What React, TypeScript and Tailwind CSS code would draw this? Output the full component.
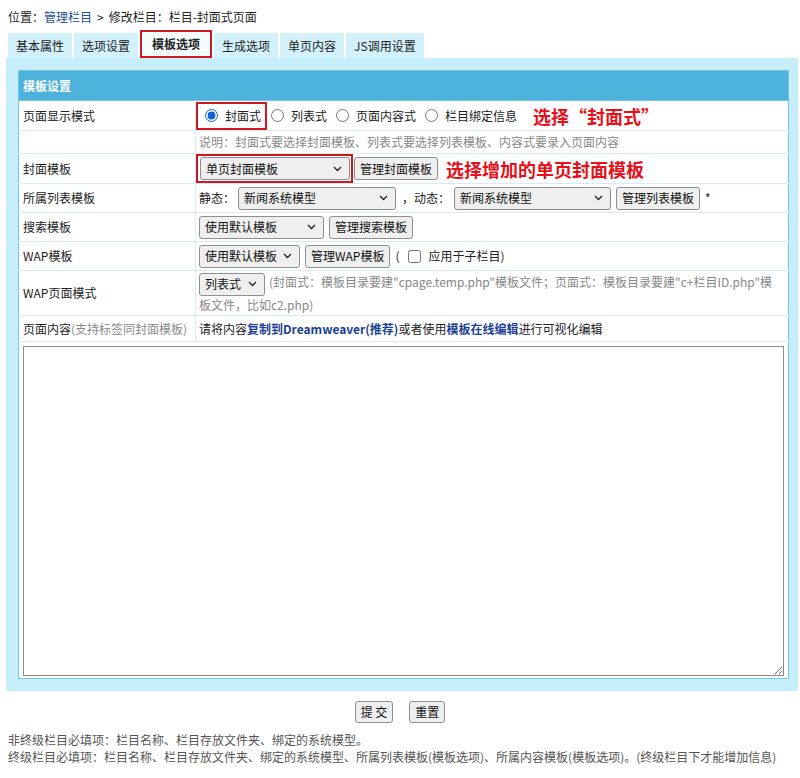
import type { ReactNode } from "react";

const font = { fontFamily: '"Noto Sans CJK SC", "Noto Sans", sans-serif' };

function Chevron() {
  return (
    <svg width="9" height="6" viewBox="0 0 9 6" className="pointer-events-none absolute right-[8px] top-1/2 -translate-y-1/2">
      <path d="M1 1 L4.5 4.5 L8 1" fill="none" stroke="#222" strokeWidth="1.3" />
    </svg>
  );
}

function Select({ value, w }: { value: string; w: string }) {
  return (
    <span className="relative inline-block align-middle">
      <select
        defaultValue={value}
        className={`${w} h-[23px] appearance-none rounded-[3px] border border-[#8f8f8f] bg-[#efefef] pl-[5px] pr-[20px] text-[12px] text-[#111] outline-none`}
        style={font}
      >
        <option>{value}</option>
      </select>
      <Chevron />
    </span>
  );
}

function Btn({ children }: { children: ReactNode }) {
  return (
    <button
      className="inline-flex h-[23px] items-center rounded-[3px] border border-[#8f8f8f] bg-[#efefef] px-[5px] align-middle text-[12px] text-[#111]"
      style={font}
    >
      {children}
    </button>
  );
}

function Radio({ label, checked, cls = "" }: { label: string; checked?: boolean; cls?: string }) {
  return (
    <label className={`flex items-center gap-[7px] ${cls}`}>
      <input type="radio" name="mode" defaultChecked={checked} className="m-0 h-[13px] w-[13px] accent-[#0f5fd8]" />
      <span>{label}</span>
    </label>
  );
}

function Row({ label, h, children }: { label: ReactNode; h: string; children: ReactNode }) {
  return (
    <tr className={`${h} border-b border-[#d3ecf5]`}>
      <td className="w-[177px] border-r border-[#d3ecf5] pl-[4px] align-middle">{label}</td>
      <td className="pl-[3px] align-middle">{children}</td>
    </tr>
  );
}

const tabs = ["基本属性", "选项设置", "模板选项", "生成选项", "单页内容", "JS调用设置"];

export default function App() {
  return (
    <div className="min-h-[778px] w-[800px] bg-white text-[12px] text-[#222]" style={font}>
      <div className="h-[30px] pl-[8px] pt-[8px] leading-[17px]">
        位置：<span className="text-[#1b4f9c]">管理栏目</span>
        <span className="mx-[5px]">&gt;</span>修改栏目：栏目-封面式页面
      </div>

      <div className="flex h-[28px] items-end gap-[2px] pl-[8px]">
        {tabs.map((t) =>
          t === "模板选项" ? (
            <div key={t} className="flex h-[28px] items-center border-2 border-[#d0161e] bg-[#f4fcff] px-[10px] font-bold">
              {t}
            </div>
          ) : (
            <div key={t} className="flex h-[25px] items-center bg-[#d2f1fb] px-[8px]">
              {t}
            </div>
          )
        )}
      </div>

      <div className="ml-[6px] w-[792px] bg-[#c6effb] pb-[12px] pl-[12px] pr-[10px] pt-[12px]">
        <table className="w-[770px] border-collapse border border-[#72c6e8] bg-white">
          <tbody>
            <tr className="h-[30px] border-b border-[#72c6e8] bg-[#4db3dd]">
              <td colSpan={2} className="pl-[4px] font-bold text-white">
                模板设置
              </td>
            </tr>
            <Row label="页面显示模式" h="h-[30px]">
              <div className="-ml-[3px] flex items-center">
                <div className="flex h-[28px] items-center border-2 border-[#d0161e] pl-[7px] pr-[4px]">
                  <Radio label="封面式" checked />
                </div>
                <Radio label="列表式" cls="ml-[4px]" />
                <Radio label="页面内容式" cls="ml-[9px]" />
                <Radio label="栏目绑定信息" cls="ml-[9px]" />
                <span className="ml-[16px] text-[18px] font-bold leading-none text-[#e60f1a]">选择“封面式”</span>
              </div>
            </Row>
            <Row label="" h="h-[23px]">
              <span className="text-[#888]">说明：封面式要选择封面模板、列表式要选择列表模板、内容式要录入页面内容</span>
            </Row>
            <Row label="封面模板" h="h-[30px]">
              <div className="-ml-[3px] flex items-center gap-[1px]">
                <div className="flex h-[29px] items-center border-2 border-[#d0161e] pl-[2px] pr-[1px]">
                  <Select value="单页封面模板" w="w-[150px]" />
                </div>
                <Btn>管理封面模板</Btn>
                <span className="ml-[7px] text-[18px] font-bold leading-none text-[#e60f1a]">选择增加的单页封面模板</span>
              </div>
            </Row>
            <Row label="所属列表模板" h="h-[29px]">
              <div className="flex items-center">
                静态：
                <span className="ml-[3px]">
                  <Select value="新闻系统模型" w="w-[158px]" />
                </span>
                <span className="ml-[6px] mr-[4px]">，动态：</span>
                <Select value="新闻系统模型" w="w-[157px]" />
                <span className="ml-[5px]">
                  <Btn>管理列表模板</Btn>
                </span>
                <span className="ml-[5px]">*</span>
              </div>
            </Row>
            <Row label="搜索模板" h="h-[29px]">
              <div className="flex items-center gap-[5px]">
                <Select value="使用默认模板" w="w-[125px]" />
                <Btn>管理搜索模板</Btn>
              </div>
            </Row>
            <Row label="WAP模板" h="h-[29px]">
              <div className="flex items-center gap-[5px]">
                <Select value="使用默认模板" w="w-[101px]" />
                <Btn>管理WAP模板</Btn>
                <span className="flex items-center gap-[6px]">
                  (
                  <input type="checkbox" className="m-0 ml-[2px] h-[13px] w-[13px]" />
                  <span className="ml-[2px]">应用于子栏目)</span>
                </span>
              </div>
            </Row>
            <Row label="WAP页面模式" h="h-[45px]">
              <div className="pr-[6px] leading-[18px] text-[#888]">
                <Select value="列表式" w="w-[66px]" />
                <span className="ml-[4px]">
                  (封面式：模板目录要建"cpage.temp.php"模板文件；页面式：模板目录要建"c+栏目ID.php"模板文件，比如c2.php)
                </span>
              </div>
            </Row>
            <Row
              label={
                <>
                  页面内容<span className="text-[#888]">(支持标签同封面模板)</span>
                </>
              }
              h="h-[26px]"
            >
              请将内容<span className="font-bold text-[#1b3f96]">复制到Dreamweaver(推荐)</span>或者使用
              <span className="font-bold text-[#1b3f96]">模板在线编辑</span>进行可视化编辑
            </Row>
            <tr>
              <td colSpan={2} className="px-[4px] pb-[2px] pt-[4px]">
                <textarea className="block h-[330px] w-[761px] resize border border-[#8a8a8a] outline-none" />
              </td>
            </tr>
          </tbody>
        </table>
      </div>

      <div className="mt-[10px] flex justify-center gap-[16px]">
        <button className="h-[22px] rounded-[3px] border border-[#8f8f8f] bg-[#efefef] px-[5px] text-[12px] text-[#111]" style={font}>
          提 交
        </button>
        <button className="h-[22px] rounded-[3px] border border-[#8f8f8f] bg-[#efefef] px-[5px] text-[12px] text-[#111]" style={font}>
          重置
        </button>
      </div>

      <div className="mt-[8px] pl-[8px] leading-[17px] text-[#555]">
        <div>非终级栏目必填项：栏目名称、栏目存放文件夹、绑定的系统模型。</div>
        <div>终级栏目必填项：栏目名称、栏目存放文件夹、绑定的系统模型、所属列表模板(模板选项)、所属内容模板(模板选项)。(终级栏目下才能增加信息)</div>
      </div>
    </div>
  );
}
